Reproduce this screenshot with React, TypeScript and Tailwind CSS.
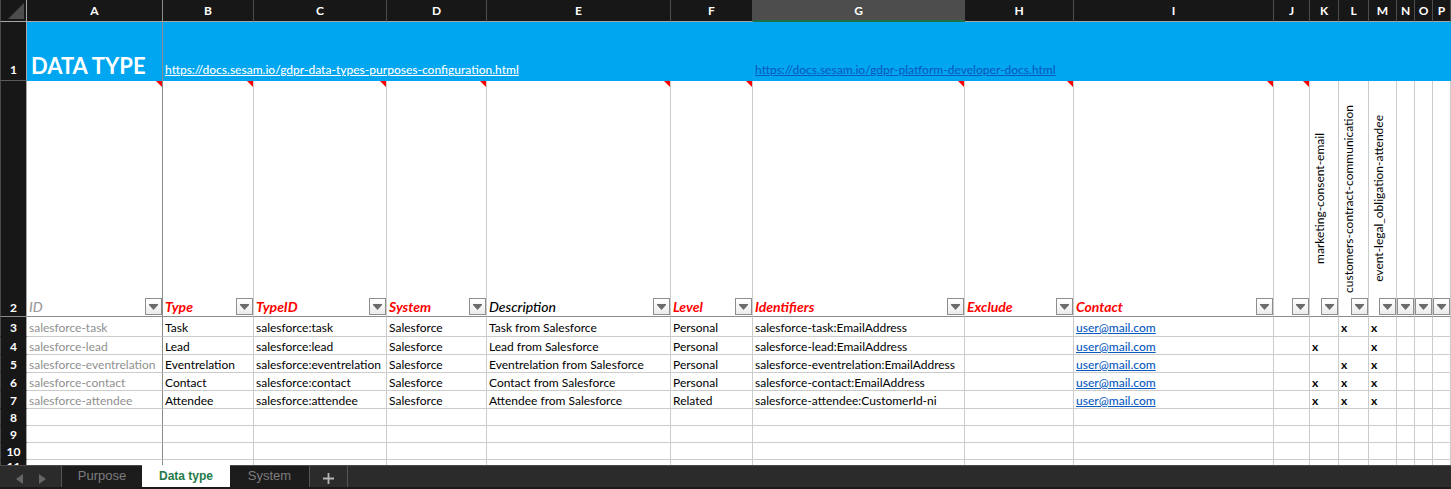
import React from "react";

type Column = {
  letter: string;
  width: string;
  label?: string;
  tone?: string;
  vertical?: boolean;
  note?: boolean;
};

const columns: Column[] = [
  { letter: "A", width: "w-[136px]", label: "ID", tone: "text-[#9a9a9a] font-medium", note: true },
  { letter: "B", width: "w-[91px]", label: "Type", tone: "text-[#ff0000] font-bold", note: true },
  { letter: "C", width: "w-[133px]", label: "TypeID", tone: "text-[#ff0000] font-bold", note: true },
  { letter: "D", width: "w-[100px]", label: "System", tone: "text-[#ff0000] font-bold", note: true },
  { letter: "E", width: "w-[184px]", label: "Description", tone: "text-black font-medium", note: true },
  { letter: "F", width: "w-[82px]", label: "Level", tone: "text-[#ff0000] font-bold", note: true },
  { letter: "G", width: "w-[212px]", label: "Identifiers", tone: "text-[#ff0000] font-bold", note: true },
  { letter: "H", width: "w-[109px]", label: "Exclude", tone: "text-[#ff0000] font-bold", note: true },
  { letter: "I", width: "w-[200px]", label: "Contact", tone: "text-[#ff0000] font-bold", note: true },
  { letter: "J", width: "w-[36px]", note: true },
  { letter: "K", width: "w-[29px]", label: "marketing-consent-email", vertical: true },
  { letter: "L", width: "w-[30px]", label: "customers-contract-communication", vertical: true },
  { letter: "M", width: "w-[28px]", label: "event-legal_obligation-attendee", vertical: true },
  { letter: "N", width: "w-[18px]" },
  { letter: "O", width: "w-[18px]" },
  { letter: "P", width: "w-[18px]" },
];

const mail = "user@mail.com";

const records: { height: string; cells: string[] }[] = [
  {
    height: "h-[20px]",
    cells: ["salesforce-task", "Task", "salesforce:task", "Salesforce", "Task from Salesforce", "Personal", "salesforce-task:EmailAddress", "", mail, "", "", "x", "x"],
  },
  {
    height: "h-[18px]",
    cells: ["salesforce-lead", "Lead", "salesforce:lead", "Salesforce", "Lead from Salesforce", "Personal", "salesforce-lead:EmailAddress", "", mail, "", "x", "", "x"],
  },
  {
    height: "h-[18px]",
    cells: ["salesforce-eventrelation", "Eventrelation", "salesforce:eventrelation", "Salesforce", "Eventrelation from Salesforce", "Personal", "salesforce-eventrelation:EmailAddress", "", mail, "", "", "x", "x"],
  },
  {
    height: "h-[18px]",
    cells: ["salesforce-contact", "Contact", "salesforce:contact", "Salesforce", "Contact from Salesforce", "Personal", "salesforce-contact:EmailAddress", "", mail, "", "x", "x", "x"],
  },
  {
    height: "h-[18px]",
    cells: ["salesforce-attendee", "Attendee", "salesforce:attendee", "Salesforce", "Attendee from Salesforce", "Related", "salesforce-attendee:CustomerId-ni", "", mail, "", "x", "x", "x"],
  },
  { height: "h-[17px]", cells: [] },
  { height: "h-[17px]", cells: [] },
  { height: "h-[17px]", cells: [] },
  { height: "h-[17px]", cells: [] },
];

const headCell = "border-r border-b bg-[#171717] px-0 text-center font-bold text-white";

function edge(index: number) {
  return index === 0 ? "border-r-[#8c8c8c]" : "border-r-[#cccccc]";
}

function FilterButton({ name }: { name: string }) {
  return (
    <button
      type="button"
      aria-label={`Filter ${name}`}
      className="absolute right-0 bottom-px flex size-[17px] items-center justify-center border border-[#8e8e8e] bg-linear-to-b from-white to-[#ececec]"
    >
      <svg width="9" height="6" viewBox="0 0 9 6" aria-hidden="true">
        <path d="M0 0h9v1L4.5 6 0 1z" fill="#6b6b6b" />
      </svg>
    </button>
  );
}

function NoteMark() {
  return (
    <svg className="absolute top-0 right-0" width="6" height="6" viewBox="0 0 6 6" aria-hidden="true">
      <path d="M0 0h6v6z" fill="#ff0000" />
    </svg>
  );
}

function Cell({ value, index }: { value: string; index: number }) {
  if (value === mail) {
    return (
      <a href="mailto:user@mail.com" className="font-medium text-[#0a5bbf] underline">
        {value}
      </a>
    );
  }
  return <span className={index === 0 ? "text-[#8f8f8f]" : value === "x" ? "font-bold" : ""}>{value}</span>;
}

function Sheet() {
  return (
    <table className="w-full table-fixed border-separate border-spacing-0 text-[12px] leading-[14px] whitespace-nowrap text-black">
      <colgroup>
        <col className="w-[27px]" />
        {columns.map((c) => (
          <col key={c.letter} className={c.width} />
        ))}
      </colgroup>
      <thead>
        <tr className="h-[22px]">
          <th className="border-r border-b border-l border-r-[#a6a6a6] border-b-[#a6a6a6] border-l-[#4a4a4a] bg-[#171717] p-0">
            <svg className="ml-auto mr-[2px]" width="16" height="16" viewBox="0 0 16 16" aria-hidden="true">
              <path d="M16 0v16H0z" fill="#4d4d4d" />
            </svg>
          </th>
          {columns.map((c, i) => (
            <th
              key={c.letter}
              scope="col"
              className={
                c.letter === "G"
                  ? "border-r border-b-2 border-r-[#4d4d4d] border-b-[#1e7145] bg-[#4d4d4d] px-0 pt-[2px] pb-0 text-center font-bold text-white"
                  : `${headCell} pt-px pb-0 border-b-[#a6a6a6] ${i === 0 ? "border-r-[#8c8c8c]" : "border-r-[#4d4d4d]"}`
              }
            >
              {c.letter}
            </th>
          ))}
        </tr>
      </thead>
      <tbody>
        <tr className="h-[59px] bg-[#00a6f0] align-bottom">
          <th scope="row" className={`${headCell} border-l border-r-[#a6a6a6] border-b-[#5a5a5a] border-l-[#4a4a4a] pt-0 pb-[3px]`}>
            1
          </th>
          <td className="border-r border-r-[#8c8c8c] p-0 pl-1 pb-px">
            <h1 className="text-[22px] leading-[28px] font-bold text-white">DATA TYPE</h1>
          </td>
          <td colSpan={5} className="p-0 pl-[2px] pb-1">
            <a href="https://docs.sesam.io/gdpr-data-types-purposes-configuration.html" className="font-medium text-white underline">
              https://docs.sesam.io/gdpr-data-types-purposes-configuration.html
            </a>
          </td>
          <td colSpan={10} className="p-0 pl-[2px] pb-1">
            <a href="https://docs.sesam.io/gdpr-platform-developer-docs.html" className="font-medium text-[#0a5bbf] underline">
              https://docs.sesam.io/gdpr-platform-developer-docs.html
            </a>
          </td>
        </tr>
        <tr className="h-[236px] align-bottom">
          <th scope="row" className={`${headCell} border-l border-r-[#a6a6a6] border-b-[#8c8c8c] border-l-[#4a4a4a] pt-0 pb-px`}>
            2
          </th>
          {columns.map((c, i) => (
            <td
              key={c.letter}
              className={`relative border-r border-b border-b-[#8c8c8c] p-0 ${edge(i)} ${c.vertical ? "pl-[3px] align-middle" : "pl-[2px]"}`}
            >
              {c.note && <NoteMark />}
              {c.vertical ? (
                <span className="block w-[14px] rotate-180 [writing-mode:vertical-rl]">{c.label}</span>
              ) : (
                <span className={`block text-[14px] leading-[18px] italic ${c.tone ?? ""}`}>{c.label}</span>
              )}
              <FilterButton name={c.label ?? c.letter} />
            </td>
          ))}
        </tr>
        {records.map((r, n) => (
          <tr key={n} className={r.height}>
            <th
              scope="row"
              className={`${headCell} border-l border-r-[#a6a6a6] border-b-[#171717] border-l-[#4a4a4a] pb-0 ${n === records.length - 1 ? "pt-0 align-top" : "pt-[2px]"}`}
            >
              {n + 3}
            </th>
            {columns.map((c, i) => (
              <td key={c.letter} className={`border-r border-b border-b-[#cccccc] pt-[2px] pr-0 pb-0 pl-[2px] ${edge(i)}`}>
                <Cell value={r.cells[i] ?? ""} index={i} />
              </td>
            ))}
          </tr>
        ))}
      </tbody>
    </table>
  );
}

function SheetTabs() {
  return (
    <nav
      aria-label="Sheets"
      className="flex h-6 shrink-0 border-b-2 border-b-[#1a1a1a] bg-[#2b2b2b] font-['Liberation_Sans',sans-serif] text-[13px] leading-[20px]"
    >
      <div className="flex w-[62px] items-center gap-4 border-t border-r border-t-[#4a4a4a] border-r-[#555555] pt-1 pl-4">
        <button type="button" aria-label="Previous sheet">
          <svg width="7" height="10" viewBox="0 0 7 10" aria-hidden="true">
            <path d="M7 0v10L0 5z" fill="#666666" />
          </svg>
        </button>
        <button type="button" aria-label="Next sheet">
          <svg width="7" height="10" viewBox="0 0 7 10" aria-hidden="true">
            <path d="M0 0v10l7-5z" fill="#666666" />
          </svg>
        </button>
      </div>
      <button type="button" className="w-20 border-t border-t-[#4a4a4a] bg-[#1c1c1c] pb-px text-[#7d7d7d]">
        Purpose
      </button>
      <button type="button" aria-current="page" className="w-[88px] bg-white text-[12px] font-bold text-[#1e7b48]">
        Data type
      </button>
      <button type="button" className="w-20 border-t border-r border-t-[#4a4a4a] border-r-[#555555] bg-[#1c1c1c] pb-px text-[#7d7d7d]">
        System
      </button>
      <button type="button" aria-label="Add sheet" className="flex w-[38px] items-center justify-center border-t border-r border-t-[#4a4a4a] border-r-[#555555] pt-1">
        <svg width="11" height="11" viewBox="0 0 11 11" aria-hidden="true">
          <path d="M5.5 0v11M0 5.5h11" stroke="#b5b5b5" strokeWidth="1.8" />
        </svg>
      </button>
      <div className="flex-1 border-t border-t-[#4a4a4a]" />
    </nav>
  );
}

export default function App() {
  return (
    <div className="flex h-screen flex-col bg-white font-[Lato,'Noto_Sans',sans-serif]">
      <main className="min-h-0 flex-1 overflow-hidden">
        <Sheet />
      </main>
      <SheetTabs />
    </div>
  );
}
